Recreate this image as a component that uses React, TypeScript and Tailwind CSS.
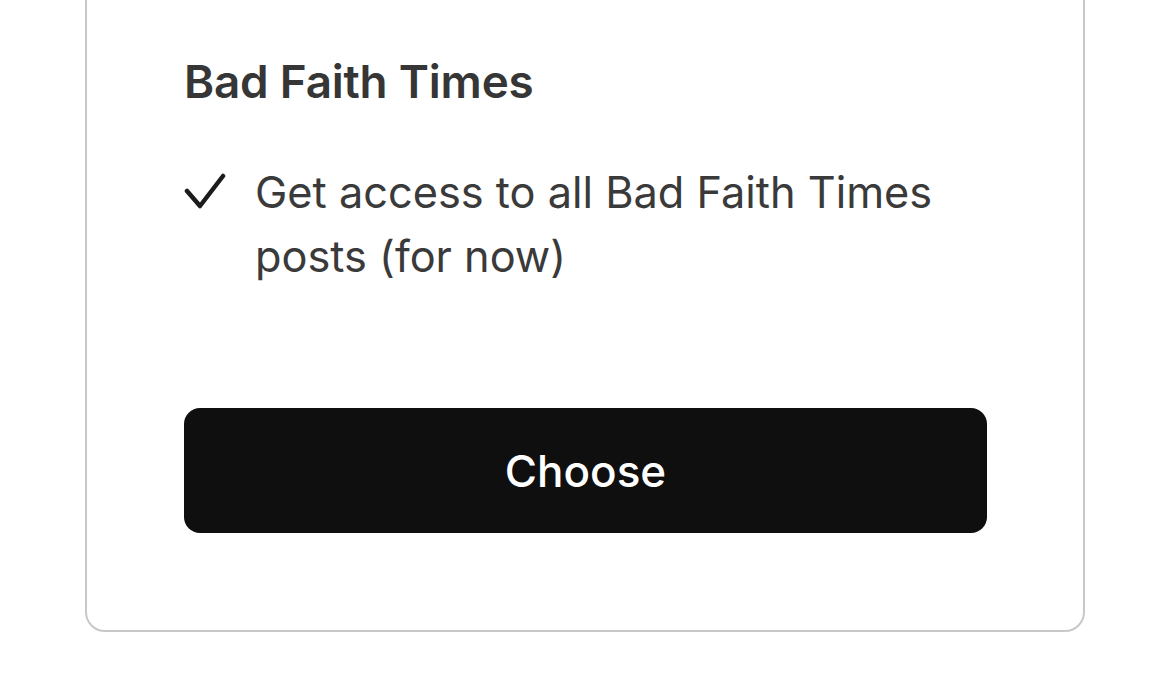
export default function App() {
  return (
    <div
      className="min-h-[685px] bg-white overflow-hidden"
      style={{ fontFamily: 'Inter, "Noto Sans", sans-serif' }}
    >
      <div className="ml-[85px] w-[1000px] -mt-[40px] border-2 border-[#c8c8c8] rounded-[20px] bg-white pl-[97px] pr-[96px] pt-[92px] pb-[97px]">
        <h2 className="text-[45.8px] leading-[56px] font-semibold text-[#363636] tracking-[-0.2px]">
          Bad Faith Times
        </h2>

        <ul className="mt-[50px]">
          <li className="flex gap-[29px]">
            <svg
              width="42"
              height="40"
              viewBox="0 0 42 40"
              className="flex-shrink-0 mt-[13px]"
            >
              <polyline
                points="3,18 16,33 39,3"
                fill="none"
                stroke="#1c1c1c"
                strokeWidth="4.5"
                strokeLinecap="round"
                strokeLinejoin="round"
              />
            </svg>
            <p className="text-[43.3px] leading-[64px] text-[#3a3a3a]">
              Get access to all Bad Faith Times posts (for now)
            </p>
          </li>
        </ul>

        <button className="mt-[120px] w-full h-[125px] rounded-[16px] bg-[#0f0f0f] text-white text-[44px] font-medium">
          Choose
        </button>
      </div>
    </div>
  );
}
